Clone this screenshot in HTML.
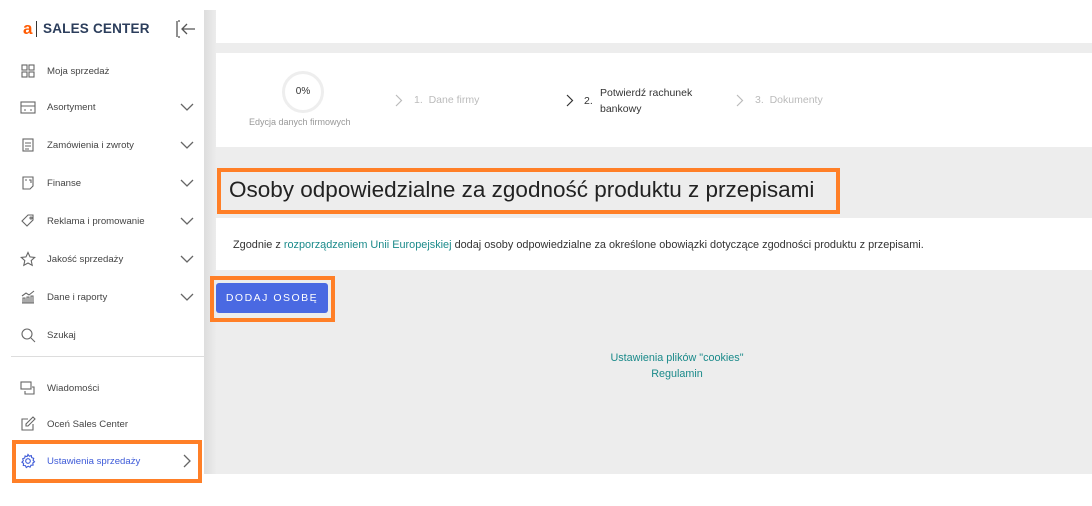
<!DOCTYPE html>
<html><head><meta charset="utf-8"><style>
*{box-sizing:border-box;margin:0;padding:0}
body{width:1092px;height:506px;background:#fff;font-family:"Liberation Sans",sans-serif;position:relative;overflow:hidden;color:#333}
.abs{position:absolute}
.side{left:0;top:0;width:204px;height:506px;background:#fff}
.item{position:absolute;left:20px;font-size:9.6px;color:#444;display:flex;align-items:center}
.item svg{width:16px;height:16px;margin-right:11px;stroke:#666;fill:none;stroke-width:1.1}
.chev{position:absolute;left:180px;width:14px;height:10px}
.gut{left:204px;top:10px;width:12px;height:464px;background:linear-gradient(90deg,#ddd,#ececec)}
.main{left:216px;top:10px;width:876px;height:464px;background:#ededed}
.sc{position:absolute;top:0}
</style></head><body>
<div class="abs side">
 <div class="abs" style="left:23px;top:19px;font-size:17px;color:#ff5a00;font-weight:bold">a</div>
 <div class="abs" style="left:36px;top:21px;width:1px;height:16px;background:#333"></div>
 <div class="abs" style="left:43px;top:21px;font-size:13.5px;font-weight:bold;color:#2c3e5c;letter-spacing:0.2px">SALES CENTER</div>
 <svg class="abs" style="left:175px;top:20px" width="22" height="18" viewBox="0 0 22 18" fill="none" stroke="#555" stroke-width="1.3"><path d="M2 1v16M5 1H3M5 17H3M20 9H7M12 4L7 9l5 5"/></svg>

 <div class="item" style="top:63px"><svg viewBox="0 0 16 16"><rect x="2" y="2" width="5" height="5"/><rect x="9" y="2" width="5" height="5"/><rect x="2" y="9" width="5" height="5"/><rect x="9" y="9" width="5" height="5"/></svg>Moja sprzedaż</div>
 <div class="item" style="top:99px"><svg viewBox="0 0 16 16"><rect x="1" y="3" width="14" height="11"/><path d="M1 7h14M4 11h2M10 11h2"/></svg>Asortyment</div>
 <div class="item" style="top:137px"><svg viewBox="0 0 16 16"><rect x="3" y="2" width="10" height="12"/><path d="M5 6h6M5 9h6M5 12h4"/></svg>Zamówienia i zwroty</div>
 <div class="item" style="top:175px"><svg viewBox="0 0 16 16"><path d="M3 2h10v9l-3 3H3z"/><path d="M5 5h2M9 5h2v3"/></svg>Finanse</div>
 <div class="item" style="top:213px"><svg viewBox="0 0 16 16"><path d="M2 8l6-6h5v5l-6 6z"/><circle cx="11" cy="5" r="1"/></svg>Reklama i promowanie</div>
 <div class="item" style="top:251px"><svg viewBox="0 0 16 16"><path d="M8 1.5l2 4.4 4.7.5-3.5 3.2 1 4.7L8 12l-4.2 2.3 1-4.7L1.3 6.4 6 5.9z"/></svg>Jakość sprzedaży</div>
 <div class="item" style="top:289px"><svg viewBox="0 0 16 16"><path d="M2 14h12M3 14V9h2v5M7 14V8h2v6M11 14V7h2v7M2 7l4-3 3 2 5-4"/></svg>Dane i raporty</div>
 <div class="item" style="top:327px"><svg viewBox="0 0 16 16"><circle cx="7" cy="7" r="5"/><path d="M11 11l4 4"/></svg>Szukaj</div>
 <div class="abs" style="left:11px;top:356px;width:193px;height:1px;background:#ddd"></div>
 <div class="item" style="top:380px"><svg viewBox="0 0 16 16"><rect x="1" y="2" width="10" height="7"/><path d="M5 11v3h9V7h-2"/></svg>Wiadomości</div>
 <div class="item" style="top:416px"><svg viewBox="0 0 16 16"><path d="M13 8v6H2V3h6M8 10l-2 0 0-2 7-7 2 2z"/></svg>Oceń Sales Center</div>
 <div class="item" style="top:453px;color:#3e5bd8"><svg viewBox="0 0 16 16" style="stroke:#3e5bd8"><circle cx="8" cy="8" r="2.3"/><path d="M8 1.5l1.3 1.7 2-.6.4 2 2 .7-.6 2 1.4 1.5-1.7 1.2.3 2.1-2.1.1-.9 1.9-1.9-.9L6.3 14.5l-.9-1.9-2.1-.1.3-2.1L1.9 9.2l1.4-1.5-.6-2 2-.7.4-2 2 .6z"/></svg>Ustawienia sprzedaży</div>
 <svg class="chev" style="top:102px" viewBox="0 0 14 10" fill="none" stroke="#666" stroke-width="1.3"><path d="M1 2l6 6 6-6"/></svg>
 <svg class="chev" style="top:140px" viewBox="0 0 14 10" fill="none" stroke="#666" stroke-width="1.3"><path d="M1 2l6 6 6-6"/></svg>
 <svg class="chev" style="top:178px" viewBox="0 0 14 10" fill="none" stroke="#666" stroke-width="1.3"><path d="M1 2l6 6 6-6"/></svg>
 <svg class="chev" style="top:216px" viewBox="0 0 14 10" fill="none" stroke="#666" stroke-width="1.3"><path d="M1 2l6 6 6-6"/></svg>
 <svg class="chev" style="top:254px" viewBox="0 0 14 10" fill="none" stroke="#666" stroke-width="1.3"><path d="M1 2l6 6 6-6"/></svg>
 <svg class="chev" style="top:292px" viewBox="0 0 14 10" fill="none" stroke="#666" stroke-width="1.3"><path d="M1 2l6 6 6-6"/></svg>
 <svg class="abs" style="left:182px;top:454px" width="10" height="14" viewBox="0 0 10 14" fill="none" stroke="#666" stroke-width="1.3"><path d="M2 1l6 6-6 6"/></svg>
 <div class="abs" style="left:12px;top:440px;width:190px;height:43px;border:4px solid #ff7f27"></div>
</div>
<div class="abs gut"></div>
<div class="abs main">
 <div class="abs" style="left:0;top:0;width:876px;height:33px;background:#fff"></div>
 <div class="abs" style="left:0;top:43px;width:876px;height:94px;background:#fff">
  <div class="abs" style="left:66px;top:18px;width:42px;height:42px;border:3px solid #eee;border-radius:50%;font-size:10px;color:#333;text-align:center;line-height:36px">0%</div>
  <div class="abs" style="left:33px;top:64px;font-size:9px;color:#999;white-space:nowrap">Edycja danych firmowych</div>
  <svg class="abs" style="left:179px;top:41px" width="8" height="13" viewBox="0 0 8 13" fill="none" stroke="#bbb" stroke-width="1.2"><path d="M1 1l5.5 5.5L1 12"/></svg>
  <div class="abs" style="left:198px;top:41px;font-size:10.5px;color:#bbb">1.&nbsp; Dane firmy</div>
  <svg class="abs" style="left:350px;top:41px" width="8" height="13" viewBox="0 0 8 13" fill="none" stroke="#333" stroke-width="1.2"><path d="M1 1l5.5 5.5L1 12"/></svg>
  <div class="abs" style="left:368px;top:42px;font-size:10.5px;color:#333">2.</div>
  <div class="abs" style="left:384px;top:32px;font-size:10.5px;color:#333;line-height:16px">Potwierdź rachunek<br>bankowy</div>
  <svg class="abs" style="left:520px;top:41px" width="8" height="13" viewBox="0 0 8 13" fill="none" stroke="#bbb" stroke-width="1.2"><path d="M1 1l5.5 5.5L1 12"/></svg>
  <div class="abs" style="left:539px;top:41px;font-size:10.5px;color:#bbb">3.&nbsp; Dokumenty</div>
 </div>
 <div class="abs" style="left:1px;top:158px;width:623px;height:46px;border:4px solid #ff7f27;font-size:22.5px;color:#222;padding:5px 0 0 8px;white-space:nowrap">Osoby odpowiedzialne za zgodność produktu z przepisami</div>
 <div class="abs" style="left:0;top:208px;width:876px;height:52px;background:#fff;font-size:10.9px;color:#333;padding:21px 0 0 17px;white-space:nowrap">Zgodnie z <span style="color:#1a8a8a">rozporządzeniem Unii Europejskiej</span> dodaj osoby odpowiedzialne za określone obowiązki dotyczące zgodności produktu z przepisami.</div>
 <div class="abs" style="left:-6px;top:266px;width:125px;height:46px;border:4px solid #ff7f27"></div>
 <div class="abs" style="left:0;top:273px;width:112px;height:30px;background:#4a69e2;border-radius:3px;color:#fff;font-size:10.5px;letter-spacing:1.5px;text-align:center;line-height:30px">DODAJ OSOBĘ</div>
 <div class="abs" style="left:341px;top:340px;width:240px;text-align:center;font-size:10.8px;color:#1a8a8a;line-height:16px">Ustawienia plików "cookies"<br>Regulamin</div>
</div>
</body></html>
